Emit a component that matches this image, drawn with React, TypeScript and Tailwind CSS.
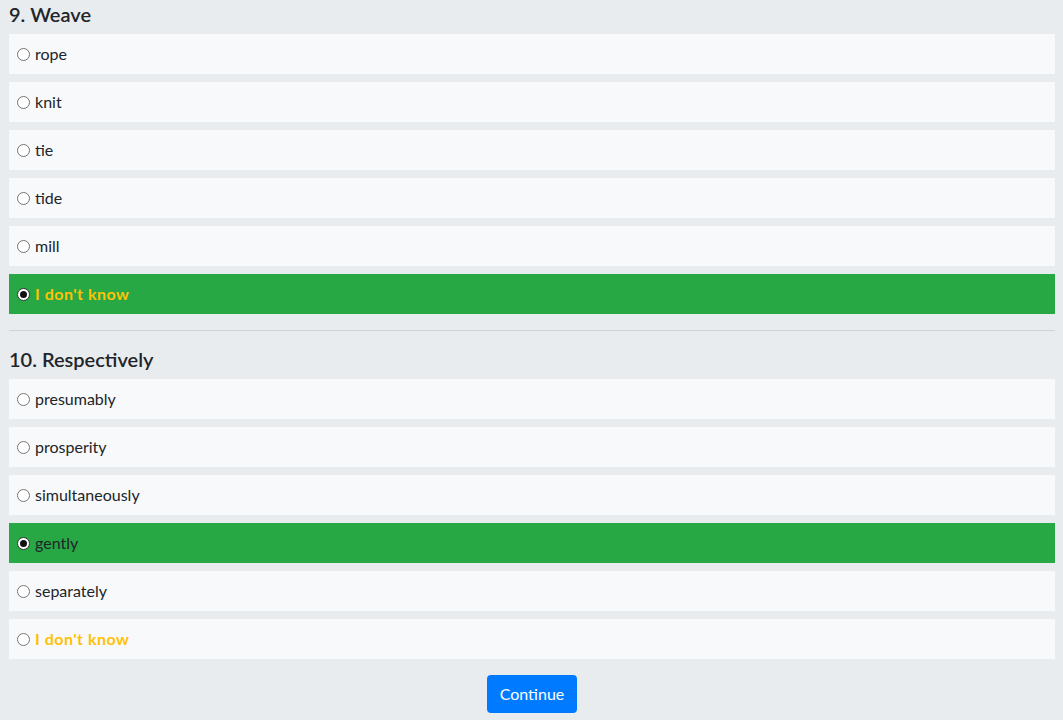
import { useState } from "react";

interface Question {
  id: number;
  title: string;
  options: string[];
}

const questions: Question[] = [
  { id: 9, title: "Weave", options: ["rope", "knit", "tie", "tide", "mill", "I don't know"] },
  {
    id: 10,
    title: "Respectively",
    options: ["presumably", "prosperity", "simultaneously", "gently", "separately", "I don't know"],
  },
];

function Radio({ checked }: { checked: boolean }) {
  return checked ? (
    <span className="w-[13px] h-[13px] rounded-full bg-white border border-[#333] flex items-center justify-center shrink-0">
      <span className="w-[7px] h-[7px] rounded-full bg-[#111]" />
    </span>
  ) : (
    <span className="w-[13px] h-[13px] rounded-full bg-white border-[1.5px] border-[#767676] shrink-0" />
  );
}

export default function App() {
  const [answers, setAnswers] = useState<Record<number, string>>({
    9: "I don't know",
    10: "gently",
  });

  return (
    <div
      className="min-h-screen bg-[#e9ecef] text-[#212529] pl-[9px] pr-[8px] pt-[2px] pb-2"
      style={{ fontFamily: "'Segoe UI', Lato, 'Liberation Sans', sans-serif" }}
    >
      {questions.map((q, qi) => (
        <div key={q.id}>
          {qi > 0 && <hr className="my-4 border-t border-[#cfd3d7]" />}
          <h5 className="text-[20px] font-semibold leading-[24px] mb-2">
            {q.id}. {q.title}
          </h5>
          <div className="flex flex-col gap-2">
            {q.options.map((opt) => {
              const checked = answers[q.id] === opt;
              const unknown = opt === "I don't know";
              return (
                <label
                  key={opt}
                  onClick={() => setAnswers({ ...answers, [q.id]: opt })}
                  className={`h-10 flex items-center gap-[5px] pl-[8px] cursor-pointer ${
                    checked ? "bg-[#28a745]" : "bg-[#f8f9fa]"
                  }`}
                >
                  <Radio checked={checked} />
                  <span
                    className={`text-base ${
                      unknown ? "font-bold tracking-[0.5px] text-[#ffc107]" : ""
                    }`}
                  >
                    {opt}
                  </span>
                </label>
              );
            })}
          </div>
        </div>
      ))}
      <div className="flex justify-center mt-4">
        <button className="bg-[#007bff] text-white text-base rounded-[4px] h-[38px] w-[90px]">
          Continue
        </button>
      </div>
    </div>
  );
}
